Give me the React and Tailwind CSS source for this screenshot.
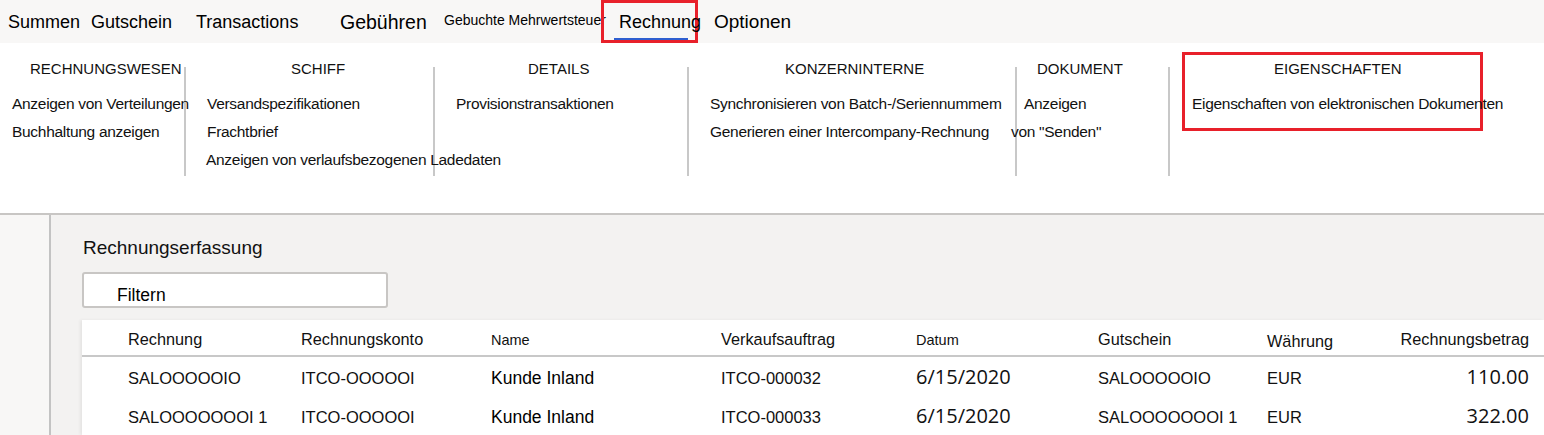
const TABS = [
  { label: 'Summen', w: 'w-[83px]', size: 'text-[18px]' },
  { label: 'Gutschein', w: 'w-[105px]', size: 'text-[18px]' },
  { label: 'Transactions', w: 'w-[144px]', size: 'text-[18px]' },
  { label: 'Gebühren', w: 'w-[104px]', size: 'text-[19.5px]' },
];

const GROUPS = [
  {
    w: 'w-[184px]',
    title: 'RECHNUNGSWESEN',
    tl: 'pl-[30px]',
    items: [
      { t: 'Anzeigen von Verteilungen', x: 'pl-[12px]' },
      { t: 'Buchhaltung anzeigen', x: 'pl-[12px]' },
    ],
  },
  {
    w: 'w-[247px]',
    title: 'SCHIFF',
    tl: 'pl-[105px]',
    items: [
      { t: 'Versandspezifikationen', x: 'pl-[21px]' },
      { t: 'Frachtbrief', x: 'pl-[21px]' },
      { t: 'Anzeigen von verlaufsbezogenen Ladedaten', x: 'pl-[20px]' },
    ],
  },
  {
    w: 'w-[252px]',
    title: 'DETAILS',
    tl: 'pl-[93px]',
    items: [{ t: 'Provisionstransaktionen', x: 'pl-[21px]' }],
  },
  {
    w: 'w-[326px]',
    title: 'KONZERNINTERNE',
    tl: 'pl-[96px]',
    items: [
      { t: 'Synchronisieren von Batch-/Seriennummem', x: 'pl-[21px]' },
      { t: 'Generieren einer Intercompany-Rechnung', x: 'pl-[21px]' },
    ],
  },
  {
    w: 'w-[151px]',
    title: 'DOKUMENT',
    tl: 'pl-[20px]',
    items: [
      { t: 'Anzeigen', x: 'pl-[7px]' },
      { t: 'von "Senden"', x: 'ml-[-6px]' },
    ],
  },
];

const ROWS = [
  ['SALOOOOOIO', 'ITCO-OOOOOI', 'Kunde Inland', 'ITCO-000032', '6/15/2020', 'SALOOOOOIO', 'EUR', '110.00'],
  ['SALOOOOOOOI 1', 'ITCO-OOOOOI', 'Kunde Inland', 'ITCO-000033', '6/15/2020', 'SALOOOOOOOI 1', 'EUR', '322.00'],
];

const COLS = 'grid grid-cols-[46px_173px_190px_230px_195px_182px_169px_130px_1fr]';

function Divider() {
  return <div className="mt-[24px] h-[109px] w-[2px] shrink-0 bg-[#c8c8c8]" />;
}

function Group({ g }) {
  return (
    <div className={`${g.w} shrink-0 flex flex-col`}>
      <div className={`${g.tl} mt-[16px] h-[20px] leading-[20px] text-[15px] text-[#111] whitespace-nowrap`}>{g.title}</div>
      <div className="mt-[11px] flex flex-col">
        {g.items.map(it => (
          <div key={it.t} className={`${it.x} h-[28px] leading-[28px] text-[15.5px] tracking-[-0.3px] text-[#111] whitespace-nowrap relative`}>
            {it.t}
          </div>
        ))}
      </div>
    </div>
  );
}

export default function App() {
  return (
    <div className="w-[1544px] h-[435px] overflow-hidden bg-white font-['Liberation_Sans',Arial,sans-serif] text-black">
      {/* Tabs */}
      <div className="h-[43px] bg-[#f8f7f6] flex items-stretch pl-[8px]">
        {TABS.map(t => (
          <div key={t.label} className={`${t.w} ${t.size} flex items-center pt-[2px] whitespace-nowrap`}>{t.label}</div>
        ))}
        <div className="w-[157px] text-[14px] flex items-center pb-[3px] whitespace-nowrap">Gebuchte Mehrwertsteuer</div>
        <div className="relative w-[97px] border-[3px] border-[#e8202a] flex items-center pl-[15px] text-[18px] pt-[2px]">
          Rechnung
          <div className="absolute left-[10px] top-[35px] w-[74px] h-[2px] bg-[#2f5fd0]" />
        </div>
        <div className="ml-[16px] text-[19px] flex items-center pt-[2px]">Optionen</div>
      </div>

      {/* Ribbon */}
      <div className="h-[170px] flex items-start">
        {GROUPS.map((g, i) => (
          <div key={g.title} className="flex items-start">
            {i > 0 && <Divider />}
            <Group g={g} />
          </div>
        ))}
        <Divider />
        <div className="ml-[12px] mt-[9px] w-[301px] h-[79px] border-[3px] border-[#e8202a] shrink-0">
          <div className="pl-[89px] mt-[4px] h-[20px] leading-[20px] text-[15px] text-[#111]">EIGENSCHAFTEN</div>
          <div className="pl-[7px] mt-[11px] h-[28px] leading-[28px] text-[15.5px] tracking-[-0.3px] text-[#111] whitespace-nowrap">
            Eigenschaften von elektronischen Dokumenten
          </div>
        </div>
      </div>

      {/* Content */}
      <div className="border-t-2 border-[#c8c6c4] flex h-[222px]">
        <div className="w-[51px] bg-[#f8f7f6] border-r-2 border-[#c3c3c3] shrink-0" />
        <div className="flex-1 bg-[#f3f2f1] pl-[31px]">
          <div className="mt-[22px] h-[22px] leading-[22px] text-[19px] text-[#111] pl-[1px]">Rechnungserfassung</div>
          <div className="mt-[13px] w-[306px] h-[36px] bg-white border-2 border-[#c8c6c4] rounded-[3px] pl-[33px] flex items-center text-[17.5px] pt-[10px]">
            Filtern
          </div>
          <div className="mt-[12px] bg-white shadow-[-2px_0_3px_rgba(0,0,0,0.06)]">
            <div className={`${COLS} h-[37px] items-center border-b-2 border-[#c8c8c8] text-[16.3px] text-[#111] pt-[4px]`}>
              <div />
              <div>Rechnung</div>
              <div>Rechnungskonto</div>
              <div className="text-[14.5px] pt-[3px]">Name</div>
              <div>Verkaufsauftrag</div>
              <div className="text-[14.5px] pt-[3px]">Datum</div>
              <div>Gutschein</div>
              <div className="pt-[3px]">Währung</div>
              <div className="text-right pr-[15px]">Rechnungsbetrag</div>
            </div>
            {ROWS.map((r, i) => (
              <div key={i} className={`${COLS} h-[39px] items-center text-[16.5px] text-[#111] pt-[4px]`}>
                <div />
                <div>{r[0]}</div>
                <div>{r[1]}</div>
                <div className="text-[17.5px] text-black">{r[2]}</div>
                <div>{r[3]}</div>
                <div className="font-['Open_Sans',sans-serif] text-[20px] pb-[4px]">{r[4]}</div>
                <div>{r[5]}</div>
                <div>{r[6]}</div>
                <div className="text-right pr-[15px] font-['Open_Sans',sans-serif] text-[20px] pb-[4px]">{r[7]}</div>
              </div>
            ))}
          </div>
        </div>
      </div>
    </div>
  );
}
